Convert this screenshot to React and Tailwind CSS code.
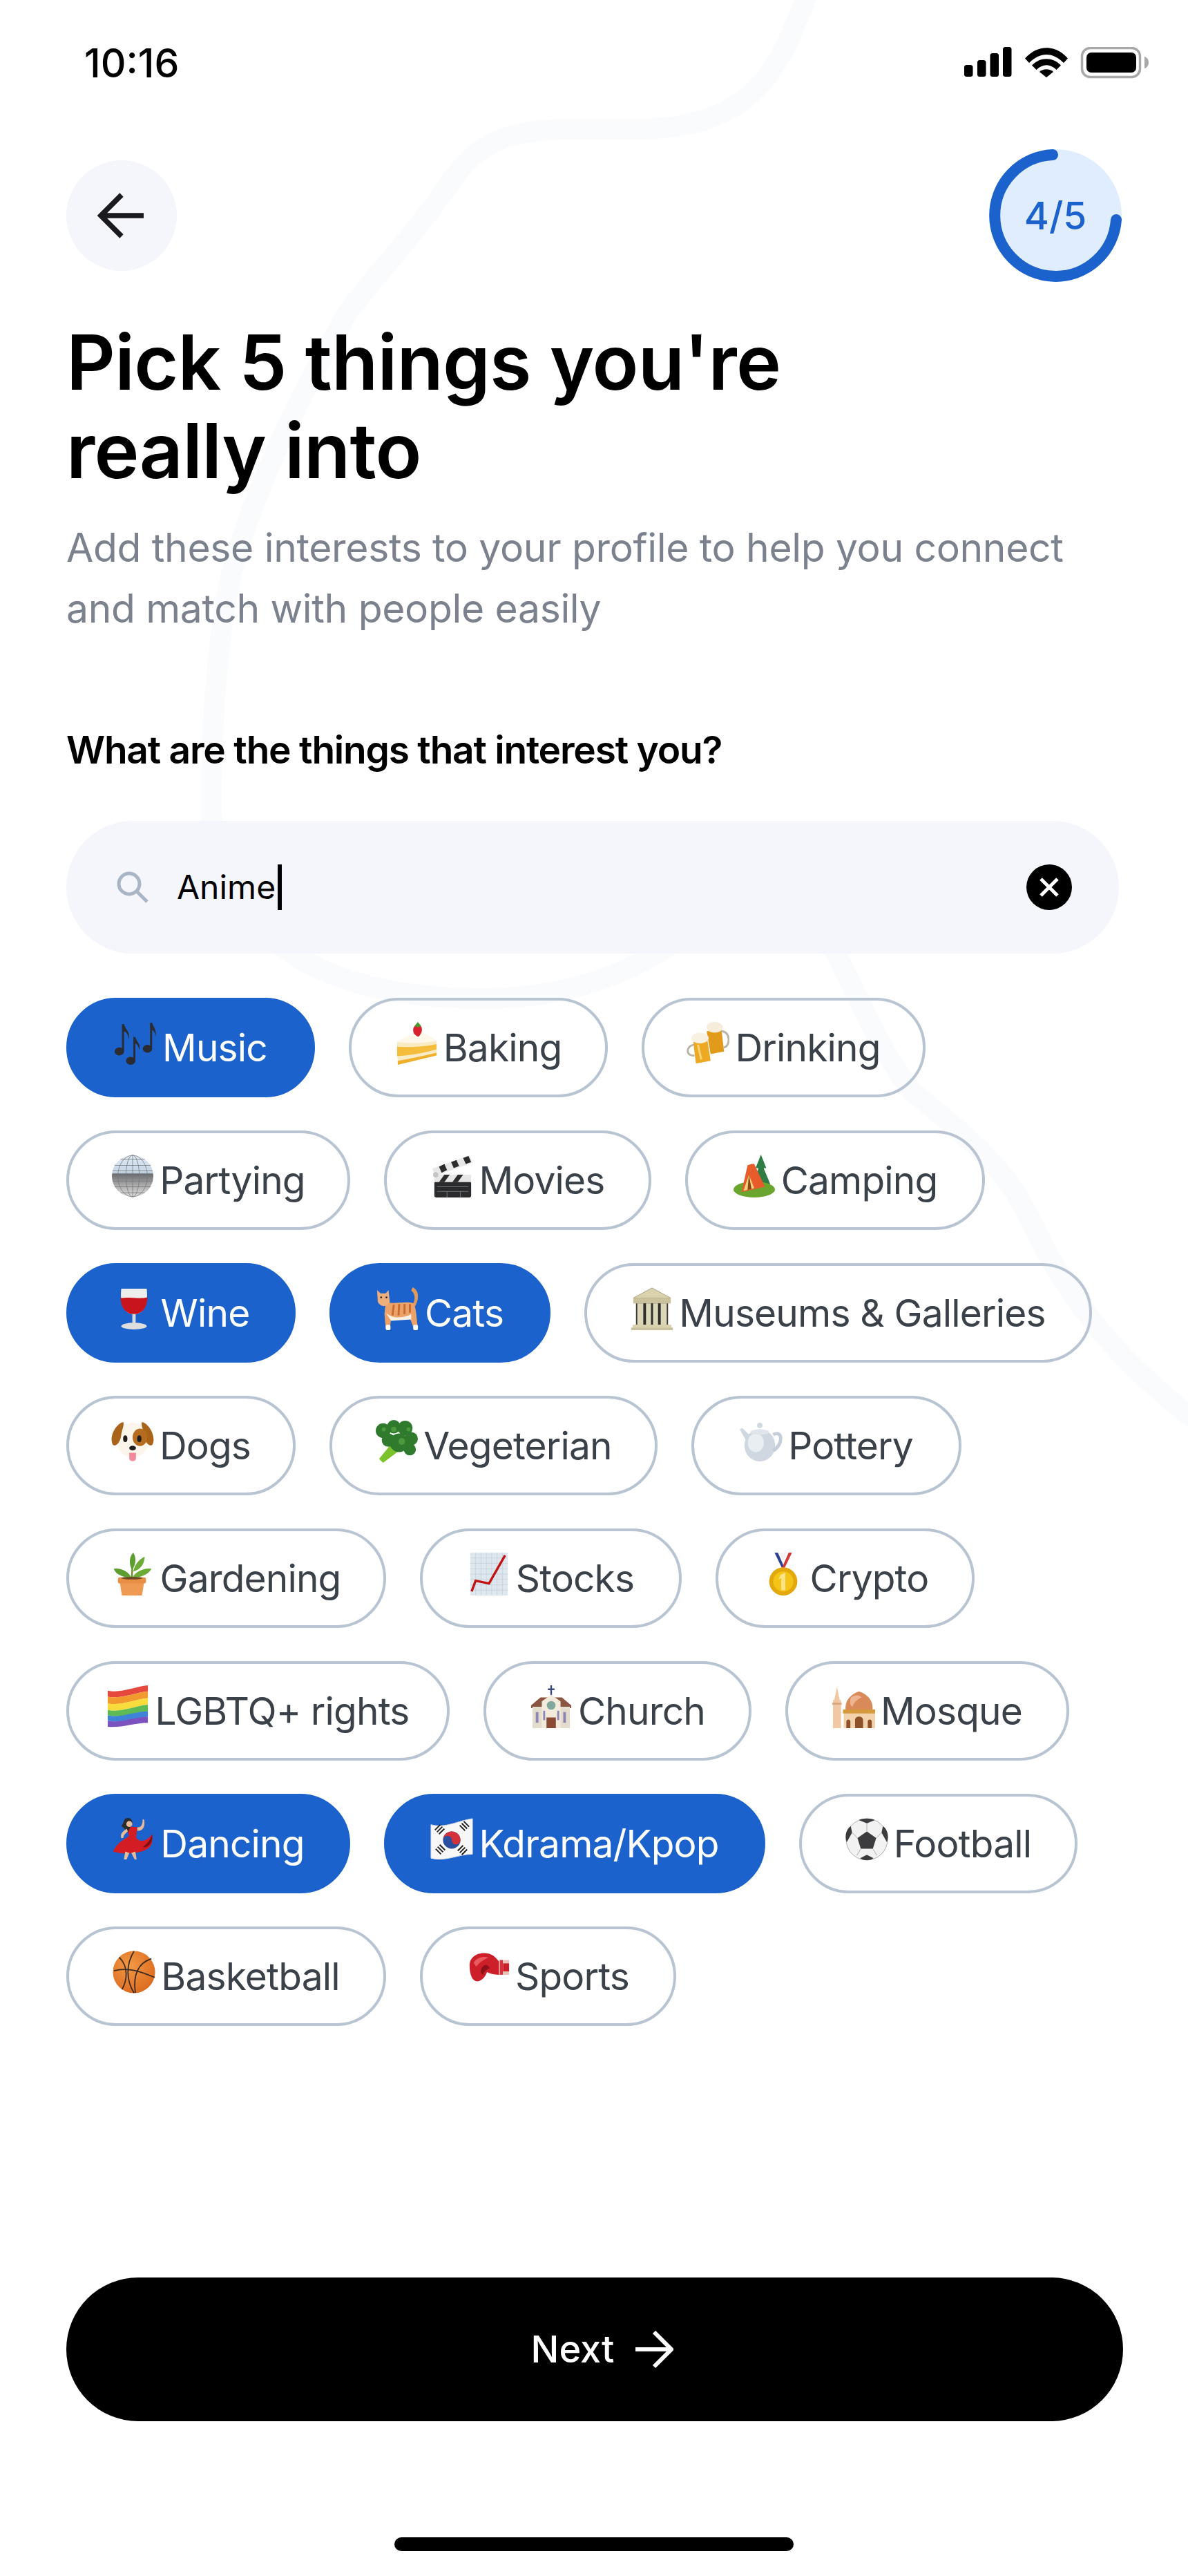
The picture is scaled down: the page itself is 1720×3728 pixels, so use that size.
import React from "react";

const font = { fontFamily: "Inter, sans-serif" };

const Cake = () => (
  <svg viewBox="0 0 64 64" className="h-full w-full">
    <path d="M3 30 L36 12 L62 28 L62 50 L4 64 Z" fill="#f9ebc4" />
    <path d="M3 30 L36 12 L62 28 C40 32 20 32 3 30 Z" fill="#fff8ea" />
    <path d="M3 37 C24 38 44 37 62 33 L62 41 C44 46 24 50 3 51 Z" fill="#f5bd3c" />
    <path d="M4 58 C24 55 44 50 62 46 L62 50 L4 64 Z" fill="#efb02e" />
    <path d="M27 12 C27 5 34 3 38 6 C42 9 40 18 35 22 C30 20 27 17 27 12 Z" fill="#d9202f" />
    <path d="M29 6 L34 0 L39 6 L34 8 Z" fill="#4c9a2a" />
  </svg>
);
const Notes = () => (
  <svg viewBox="0 0 64 64" className="h-full w-full" fill="#2a2c31">
    <ellipse cx="8" cy="44" rx="7" ry="6" />
    <path d="M12 42 L12 3 L15 3 C17 12 25 14 22 26 C21 16 17 15 15 14 L15 44 Z" />
    <ellipse cx="25" cy="58" rx="7" ry="6" />
    <path d="M29 56 L29 22 L32 23 C34 30 40 32 38 42 C36 34 34 33 32 32 L32 58 Z" />
    <ellipse cx="50" cy="40" rx="7" ry="6" />
    <path d="M54 38 L54 1 L57 1 C59 8 64 12 62 22 C61 14 59 13 57 12 L57 40 Z" />
  </svg>
);
const Beer = () => (
  <svg viewBox="0 0 64 64" className="h-full w-full">
    <path d="M30 14 L52 10 L56 44 L36 48 Z" fill="#e29a1a" />
    <path d="M52 14 C66 13 66 38 55 38" fill="none" stroke="#b9b4a5" strokeWidth="3" />
    <ellipse cx="42" cy="8" rx="12" ry="8" fill="#f5ecda" />
    <path d="M10 30 L31 26 L36 58 L14 62 Z" fill="#eda824" />
    <path d="M11 34 C-2 36 -1 52 12 50" fill="none" stroke="#b9b4a5" strokeWidth="3" />
    <ellipse cx="20" cy="24" rx="13" ry="8" fill="#f8f1e2" />
    <path d="M17 34 L22 56" stroke="#fbd778" strokeWidth="3" />
  </svg>
);
const Disco = () => (
  <svg viewBox="0 0 64 64" className="h-full w-full">
    <defs>
      <linearGradient id="disco" x1="0" y1="0" x2="0" y2="1">
        <stop offset="0" stopColor="#dfeaf5" />
        <stop offset=".42" stopColor="#c4d6e8" />
        <stop offset=".45" stopColor="#6a6c70" />
        <stop offset=".7" stopColor="#a6a6a6" />
        <stop offset="1" stopColor="#e0e0e0" />
      </linearGradient>
    </defs>
    <circle cx="32" cy="32" r="31" fill="url(#disco)" />
    <g fill="none" stroke="#777" strokeWidth=".8">
      <ellipse cx="32" cy="32" rx="10" ry="31" />
      <ellipse cx="32" cy="32" rx="22" ry="31" />
      <path d="M32 1 V63 M5 16 H59 M1 32 H63 M5 48 H59 M14 7 H50 M14 57 H50 M2 24 H62 M2 40 H62" />
    </g>
  </svg>
);
const Clapper = () => (
  <svg viewBox="0 0 64 64" className="h-full w-full">
    <path d="M2 21 L58 1 L62 12 L6 32 Z" fill="#e7e7e7" />
    <path d="M12 18 L20 14 L24 23 L16 27 Z M30 11 L38 8 L42 17 L34 20 Z M48 5 L56 2 L60 11 L52 14 Z" fill="#2c2c2c" />
    <rect x="5" y="40" width="55" height="24" rx="3" fill="#2a2b2d" />
    <rect x="5" y="30" width="55" height="11" fill="#e7e7e7" />
    <path d="M12 41 L20 30 H28 L20 41 Z M32 41 L40 30 H48 L40 41 Z" fill="#2c2c2c" />
    <path d="M9 48 H56 M9 55 H56 M24 55 V64 M44 55 V64" stroke="#777" strokeWidth="1" />
    <circle cx="7" cy="30" r="4" fill="#c5c5c5" />
  </svg>
);
const Tent = () => (
  <svg viewBox="0 0 64 64" className="h-full w-full">
    <path d="M42 0 L50 20 L46 20 L56 44 L34 44 L38 20 L34 20 Z" fill="#2e7d44" />
    <ellipse cx="32" cy="52" rx="31" ry="12" fill="#6aa52d" />
    <path d="M22 16 C26 15 29 13 32 14 L48 48 L13 56 Z" fill="#e85b2b" />
    <path d="M24 30 L16 54 L32 50 Z" fill="#f4d27a" />
    <path d="M24 30 L22 53 L28 51 Z" fill="#8a4a16" />
  </svg>
);
const Glass = () => (
  <svg viewBox="0 0 64 64" className="h-full w-full">
    <path d="M13 2 H51 C53 20 50 38 34 40 H30 C14 38 11 20 13 2 Z" fill="#eeeeee" />
    <path d="M12 16 C24 14 40 18 52 15 C52 28 46 39 34 40 H30 C18 39 12 28 12 16 Z" fill="#c8141c" />
    <rect x="29.5" y="40" width="5" height="15" fill="#d9d9d9" />
    <ellipse cx="32" cy="58" rx="19" ry="5" fill="#dedede" />
  </svg>
);
const Cat = () => (
  <svg viewBox="0 0 64 64" className="h-full w-full">
    <path d="M54 0 C64 4 64 18 58 28 L54 26 C58 20 59 10 52 5 Z" fill="#e29a5c" />
    <path d="M14 22 C24 26 44 20 56 24 C60 34 60 48 62 62 H56 L50 46 L22 46 L20 62 H14 L12 40 Z" fill="#eba36a" />
    <path d="M14 38 C24 48 42 46 52 40 L52 48 L22 50 Z" fill="#fbf2e6" />
    <path d="M26 26 L24 42 M34 25 L33 42 M42 25 L42 40 M50 25 L50 38" stroke="#c9692e" strokeWidth="3" />
    <path d="M1 4 L6 9 H14 L18 4 L20 22 C16 30 6 30 2 22 Z" fill="#edb07c" />
    <circle cx="7" cy="15" r="1.4" fill="#222" />
    <circle cx="15" cy="15" r="1.4" fill="#222" />
    <rect x="14" y="56" width="7" height="8" rx="2" fill="#fff" />
    <rect x="55" y="56" width="7" height="8" rx="2" fill="#fff" />
  </svg>
);
const Museum = () => (
  <svg viewBox="0 0 64 64" className="h-full w-full">
    <path d="M32 1 L60 16 H4 Z" fill="#d9d2ac" stroke="#a9a27c" strokeWidth="1" />
    <rect x="4" y="16" width="56" height="8" fill="#c9c29c" />
    <rect x="8" y="24" width="48" height="32" fill="#3b3a33" />
    <path d="M10 24 H20 V56 H10 Z M22 24 H31 V56 H22 Z M33 24 H42 V56 H33 Z M44 24 H54 V56 H44 Z" fill="#dcd6b8" />
    <path d="M19 24 H23 V56 H19 Z M30.5 24 H33.5 V56 H30.5 Z M41 24 H45 V56 H41 Z" fill="#2f2e29" />
    <rect x="3" y="56" width="58" height="4" fill="#d9d2ac" />
    <rect x="1" y="60" width="62" height="4" fill="#c9c29c" />
  </svg>
);
const Dog = () => (
  <svg viewBox="0 0 64 64" className="h-full w-full">
    <ellipse cx="32" cy="30" rx="24" ry="26" fill="#fbf5ec" />
    <path d="M18 3 C6 6 -3 26 2 36 C6 42 14 34 15 22 C16 14 20 8 18 3 Z" fill="#a9641a" />
    <path d="M46 3 C58 6 67 26 62 36 C58 42 50 34 49 22 C48 14 44 8 46 3 Z" fill="#a9641a" />
    <ellipse cx="43" cy="26" rx="11" ry="13" fill="#b66c1e" />
    <ellipse cx="21" cy="28" rx="3.2" ry="5" fill="#1e1e1e" />
    <ellipse cx="42" cy="28" rx="3.2" ry="5" fill="#1e1e1e" />
    <ellipse cx="32" cy="42" rx="5" ry="3.5" fill="#1e1e1e" />
    <path d="M27 49 H37 V57 C37 63 27 63 27 57 Z" fill="#f08a9c" />
  </svg>
);
const Broccoli = () => (
  <svg viewBox="0 0 64 64" className="h-full w-full">
    <path d="M12 64 L6 58 L24 36 L36 46 Z" fill="#7cc22c" />
    <g fill="#2f7a2c">
      <circle cx="12" cy="16" r="11" />
      <circle cx="28" cy="10" r="10" />
      <circle cx="45" cy="12" r="11" />
      <circle cx="54" cy="28" r="10" />
      <circle cx="52" cy="44" r="9" />
      <circle cx="36" cy="34" r="14" />
      <circle cx="20" cy="30" r="10" />
    </g>
    <g fill="#4c9a3d">
      <circle cx="28" cy="14" r="4" />
      <circle cx="40" cy="32" r="5" />
      <circle cx="13" cy="14" r="3" />
      <circle cx="50" cy="14" r="3" />
    </g>
  </svg>
);
const Pot = () => (
  <svg viewBox="0 0 64 64" className="h-full w-full">
    <ellipse cx="30" cy="38" rx="23" ry="24" fill="#cfd8e0" />
    <ellipse cx="24" cy="34" rx="12" ry="14" fill="#e9eef2" />
    <ellipse cx="30" cy="18" rx="14" ry="4" fill="#dfe5ea" />
    <circle cx="30" cy="8" r="4" fill="#cfd8e0" />
    <path d="M9 30 L0 14 L4 12 L14 22 Z" fill="#cfd8e0" />
    <path d="M50 22 C64 14 66 36 50 46" fill="none" stroke="#c5ced7" strokeWidth="5" />
  </svg>
);
const Plant = () => (
  <svg viewBox="0 0 64 64" className="h-full w-full">
    <path d="M31 40 C31 26 32 14 34 6" stroke="#6f8f2a" strokeWidth="2.5" fill="none" />
    <path d="M31 26 C26 16 27 6 33 0 C38 8 37 18 31 26 Z" fill="#5d9e30" />
    <path d="M33 28 C36 14 46 8 50 6 C50 16 44 26 33 28 Z" fill="#6bab36" />
    <path d="M31 38 C24 38 6 34 4 24 C14 22 26 28 31 38 Z" fill="#5d9e30" />
    <path d="M31 38 C38 38 56 34 60 24 C50 22 36 28 31 38 Z" fill="#6bab36" />
    <path d="M12 39 H50 L46 64 H16 Z" fill="#ee9a52" />
    <rect x="10" y="37" width="42" height="9" rx="3" fill="#e88e45" />
    <ellipse cx="31" cy="38" rx="16" ry="2" fill="#6d4a24" />
  </svg>
);
const Chart = () => (
  <svg viewBox="0 0 64 64" className="h-full w-full">
    <rect x="4" width="56" height="64" fill="#dfe7ee" />
    <path d="M4 8 H60 M4 16 H60 M4 24 H60 M4 32 H60 M4 40 H60 M4 48 H60 M4 56 H60 M12 0 V64 M20 0 V64 M28 0 V64 M36 0 V64 M44 0 V64 M52 0 V64" stroke="#c5d1db" strokeWidth=".8" />
    <path d="M6 58 L12 42 L32 46 L56 4" fill="none" stroke="#c01414" strokeWidth="3.5" />
  </svg>
);
const Medal = () => (
  <svg viewBox="0 0 64 64" className="h-full w-full">
    <path d="M19 0 L30 23 H34 L24 0 Z" fill="#2e3f96" />
    <path d="M45 0 L34 23 H30 L40 0 Z" fill="#d23a35" />
    <path d="M27 0 L32 14 L37 0 Z" fill="#f4f4f4" />
    <circle cx="32" cy="43" r="21" fill="#e3a90c" />
    <circle cx="32" cy="43" r="15" fill="#f4c518" />
    <path d="M28 33 L35 30 V56 H29 V38 L25 40 Z" fill="#fbe48a" />
  </svg>
);
const Flag = () => (
  <svg viewBox="0 0 64 64" className="h-full w-full">
    <path d="M2 8 C22 12 42 2 62 0 V9 C42 11 22 21 2 17 Z" fill="#e5483d" />
    <path d="M2 17 C22 21 42 11 62 9 V19 C42 21 22 31 2 27 Z" fill="#f29a2e" />
    <path d="M2 27 C22 31 42 21 62 19 V29 C42 31 22 41 2 37 Z" fill="#f8dc3c" />
    <path d="M2 37 C22 41 42 31 62 29 V39 C42 41 22 49 2 45 Z" fill="#5dba55" />
    <path d="M2 45 C22 49 42 39 62 39 V47 C42 49 22 57 2 53 Z" fill="#3f83d8" />
    <path d="M2 53 C22 57 42 47 62 47 V56 C42 56 22 64 2 62 Z" fill="#7c52c0" />
  </svg>
);
const Church = () => (
  <svg viewBox="0 0 64 64" className="h-full w-full">
    <path d="M32 0 V16 M27 6 H37" stroke="#3d4a7e" strokeWidth="2.5" />
    <path d="M2 30 L16 18 H48 L62 30 V34 H2 Z" fill="#8a5540" />
    <rect x="4" y="32" width="56" height="32" fill="#e4dccd" />
    <path d="M18 24 L32 14 L46 24 V64 H18 Z" fill="#f2ebdc" />
    <circle cx="32" cy="30" r="6.5" fill="#7fa79a" />
    <rect x="25" y="48" width="14" height="16" fill="#8a4a36" />
    <rect x="9" y="40" width="4" height="16" fill="#8d87b8" />
    <rect x="50" y="40" width="4" height="16" fill="#8d87b8" />
    <rect x="20" y="38" width="3" height="14" fill="#8d87b8" />
    <rect x="41" y="38" width="3" height="14" fill="#8d87b8" />
  </svg>
);
const Mosque = () => (
  <svg viewBox="0 0 64 64" className="h-full w-full">
    <path d="M7 2 L11 22 H13 V64 H1 V22 H3 Z" fill="#f0c8a4" />
    <rect x="0" y="26" width="14" height="3" fill="#d9a77d" />
    <rect x="17" y="40" width="47" height="24" fill="#f3d3ae" />
    <path d="M40 9 C54 14 62 24 60 38 H20 C18 24 26 14 40 9 Z" fill="#d98a58" />
    <path d="M28 18 C34 14 40 14 44 18 C38 20 32 26 30 32 C26 30 26 22 28 18 Z" fill="#eeb592" />
    <rect x="16" y="36" width="48" height="6" fill="#d49a3c" />
    <path d="M21 64 V54 C21 50 27 50 27 54 V64 Z M34 64 V52 C34 45 46 45 46 52 V64 Z M53 64 V54 C53 50 59 50 59 54 V64 Z" fill="#8c5128" />
  </svg>
);
const Dancer = () => (
  <svg viewBox="0 0 64 64" className="h-full w-full">
    <path d="M24 28 C10 36 4 44 2 50 C14 54 30 54 44 50 C58 46 62 40 60 24 C52 36 40 38 34 26 Z" fill="#d41c24" />
    <path d="M46 44 C56 44 62 36 60 24 C58 34 52 38 46 44 Z" fill="#7a0f14" />
    <path d="M22 12 L38 14 L36 30 L26 30 Z" fill="#d41c24" />
    <path d="M29 52 L34 62 H37 L35 50 Z M20 50 L18 62 H22 L26 52 Z" fill="#e8bb98" />
    <path d="M20 1 C26 -2 32 2 30 9 C28 14 26 16 24 22 C20 18 18 14 14 12 C18 8 17 4 20 1 Z" fill="#2a2a2a" />
    <path d="M38 14 C44 14 46 10 46 2 L48 2 C50 10 48 20 38 19 Z M22 16 C16 20 12 24 14 30 L17 30 C17 26 20 23 24 20 Z" fill="#e8bb98" />
    <circle cx="26" cy="9" r="4.5" fill="#e8bb98" />
  </svg>
);
const KoreaFlag = () => (
  <svg viewBox="0 0 64 64" className="h-full w-full">
    <path d="M1 10 C22 16 42 4 63 1 V54 C42 54 22 66 1 60 Z" fill="#f7f7f7" stroke="#dedede" />
    <circle cx="32" cy="33" r="13" fill="#2b4f9e" />
    <path d="M19 33 A13 13 0 0 1 45 33 A6.5 6.5 0 0 1 32 33 A6.5 6.5 0 0 0 19 33 Z" fill="#d3323c" />
    <g stroke="#222" strokeWidth="2">
      <path d="M7 18 L15 10 M10 21 L18 13 M13 24 L21 16" />
      <path d="M44 11 L52 19 M47 8 L55 16 M50 5 L58 13" />
      <path d="M8 46 L16 54 M11 43 L19 51 M14 40 L22 48" />
      <path d="M44 52 L52 44 M47 55 L55 47 M41 49 L49 41" />
    </g>
  </svg>
);
const Soccer = () => (
  <svg viewBox="0 0 64 64" className="h-full w-full">
    <circle cx="32" cy="32" r="31" fill="#f2f2f2" stroke="#999" strokeWidth=".8" />
    <path d="M32 20 L46 30 L41 46 H23 L18 30 Z" fill="#3c3c3e" />
    <path d="M20 3 L32 8 L44 3 C38 0 26 0 20 3 Z M56 12 L54 22 L62 36 C66 26 62 16 56 12 Z M8 12 L10 22 L2 36 C-2 26 2 16 8 12 Z M22 60 L32 55 L42 60 C36 64 28 64 22 60 Z" fill="#3c3c3e" />
    <path d="M32 8 V20 M46 30 L54 22 M18 30 L10 22 M41 46 L47 56 M23 46 L17 56" stroke="#aaa" strokeWidth="1" />
  </svg>
);
const Basketball = () => (
  <svg viewBox="0 0 64 64" className="h-full w-full">
    <defs>
      <radialGradient id="bball" cx=".4" cy=".35" r=".75">
        <stop offset="0" stopColor="#f39a45" />
        <stop offset="1" stopColor="#d9661c" />
      </radialGradient>
    </defs>
    <circle cx="32" cy="32" r="31.5" fill="url(#bball)" />
    <g fill="none" stroke="#3a2a20" strokeWidth="1.8">
      <path d="M32 1 C20 20 20 44 32 63" />
      <path d="M10 10 C24 24 22 44 14 58" />
      <path d="M58 12 C40 18 30 34 34 63" />
      <path d="M2 30 C24 24 44 32 63 40" />
    </g>
  </svg>
);
const Glove = () => (
  <svg viewBox="0 0 64 64" className="h-full w-full">
    <path d="M4 22 C4 8 18 2 30 4 C40 5 44 12 48 16 V36 C40 36 34 34 30 32 C28 38 24 44 16 46 C8 46 4 36 4 22 Z" fill="#cc1f2a" />
    <path d="M10 18 C14 10 26 8 32 10 C24 14 18 18 14 24 Z" fill="#e85a60" />
    <path d="M22 26 C26 20 30 20 34 26 C30 28 26 30 24 36 C20 34 20 30 22 26 Z" fill="#8e1018" />
    <rect x="49" y="14" width="5" height="22" fill="#d6343b" />
    <rect x="54" y="14" width="9" height="22" fill="#e9c3b5" />
    <rect x="54" y="19" width="9" height="12" fill="#cc1f2a" />
  </svg>
);

const chips = [
  { label: "Music", Icon: Notes, on: true, cls: "w-[360px]" },
  { label: "Baking", Icon: Cake, cls: "w-[375px]" },
  { label: "Drinking", Icon: Beer, cls: "w-[411px]" },
  { label: "Partying", Icon: Disco, cls: "w-[411px]" },
  { label: "Movies", Icon: Clapper, cls: "w-[387px]" },
  { label: "Camping", Icon: Tent, cls: "w-[434px]" },
  { label: "Wine", Icon: Glass, on: true, cls: "w-[332px]" },
  { label: "Cats", Icon: Cat, on: true, cls: "w-[320px]" },
  { label: "Museums & Galleries", Icon: Museum, cls: "w-[735px]" },
  { label: "Dogs", Icon: Dog, cls: "w-[332px]" },
  { label: "Vegeterian", Icon: Broccoli, cls: "w-[475px]" },
  { label: "Pottery", Icon: Pot, cls: "w-[391px]" },
  { label: "Gardening", Icon: Plant, cls: "w-[463px]" },
  { label: "Stocks", Icon: Chart, cls: "w-[379px]" },
  { label: "Crypto", Icon: Medal, cls: "w-[375px]" },
  { label: "LGBTQ+ rights", Icon: Flag, cls: "w-[555px]" },
  { label: "Church", Icon: Church, cls: "w-[388px]" },
  { label: "Mosque", Icon: Mosque, cls: "w-[411px]" },
  { label: "Dancing", Icon: Dancer, on: true, cls: "w-[411px]" },
  { label: "Kdrama/Kpop", Icon: KoreaFlag, on: true, cls: "w-[552px]" },
  { label: "Football", Icon: Soccer, cls: "w-[403px]" },
  { label: "Basketball", Icon: Basketball, cls: "w-[463px]" },
  { label: "Sports", Icon: Glove, cls: "w-[371px]" },
];

function Chip({ label, Icon, on, cls }) {
  return (
    <div
      className={`flex h-[144px] items-center justify-center gap-2 rounded-full border-4 ${cls} ${
        on ? "border-[#1c62cc] bg-[#1c62cc] text-white" : "border-[#b8c4d2] text-[#3b4148]"
      }`}
    >
      <span className="relative -top-[6px] h-[62px] w-[62px] shrink-0">
        <Icon />
      </span>
      <span className="whitespace-nowrap text-[55px] leading-none tracking-[-0.015em]">{label}</span>
    </div>
  );
}

export default function App() {
  return (
    <div className="relative h-[3728px] w-[1720px] overflow-hidden bg-white text-black" style={font}>
      <svg className="absolute left-0 top-0" width="1720" height="3728" fill="none">
        <path
          d="M1170 -10 C1130 90 1100 187 920 187 L820 187 C720 187 680 220 650 267 C600 340 550 390 505 450 C440 560 370 700 335 830 C315 920 305 1050 306 1180 C310 1300 400 1445 699 1445 C850 1445 950 1390 1020 1330 C1100 1270 1170 1330 1211 1380 C1250 1460 1280 1530 1321 1580 C1370 1620 1420 1660 1456 1706 C1490 1750 1510 1810 1537 1849 C1570 1900 1620 1970 1730 2055"
          stroke="#fafbfd"
          strokeWidth="30"
        />
      </svg>

      <div className="relative flex h-[3728px] flex-col">
        <div className="flex h-[216px] justify-between pl-[122px] pr-[57px] pt-[62px]">
          <span className="text-[57px] font-medium leading-[60px]">10:16</span>
          <svg width="267" height="48" viewBox="0 0 267 48" className="mt-[6px]">
            <g fill="#000">
              <rect x="0" y="26" width="12.5" height="17" rx="3.5" />
              <rect x="19" y="19" width="12.5" height="24" rx="3.5" />
              <rect x="37.5" y="9" width="12.5" height="34" rx="3.5" />
              <rect x="56" y="0" width="12.5" height="43" rx="3.5" />
              <path d="M88 16.5 C106 -4 132 -4 150 16.5 L144 23 C128 7 110 7 94 23 Z" />
              <path d="M98 26.5 C110 14 128 14 140 26.5 L133.5 33 C124 24 114 24 104.5 33 Z" />
              <path d="M109 36 C114 31 124 31 129 36 L119 44 Z" />
            </g>
            <rect x="170.5" y="1.5" width="84" height="42" rx="12" fill="none" stroke="#a8a8a8" strokeWidth="3.5" />
            <rect x="177" y="8" width="72" height="29" rx="7" fill="#000" />
            <path d="M261 14 C265 15 267 19 267 22.5 C267 26 265 30 261 31 Z" fill="#a8a8a8" />
          </svg>
        </div>

        <div className="flex h-[192px] items-start justify-between pl-[96px] pr-[96px]">
          <div className="mt-[16px] flex h-[160px] w-[160px] items-center justify-center rounded-full bg-[#f4f6fb]">
            <svg width="72" height="72" viewBox="0 0 72 72" fill="none" stroke="#1a1a1f" strokeWidth="7.5">
              <path d="M68 36 H8 M36 6 L6 36 L36 66" />
            </svg>
          </div>
          <div className="relative flex h-[192px] w-[192px] items-center justify-center rounded-full bg-[#e0edfe]">
            <svg width="192" height="192" viewBox="0 0 192 192" className="absolute inset-0" fill="none">
              <path
                d="M92 8 A88 88 0 1 0 184 102"
                stroke="#1c62cc"
                strokeWidth="16"
                strokeLinecap="round"
              />
            </svg>
            <span className="relative text-[55px] font-medium leading-none text-[#1c62cc]">4/5</span>
          </div>
        </div>

        <div className="mt-[52px] px-[96px]">
          <h1 className="text-[110px] font-semibold leading-[128px] tracking-[-0.007em]">
            Pick 5 things you're
            <br />
            really into
          </h1>
          <p className="mt-[33px] text-[57px] leading-[88px] tracking-[-0.006em] text-[#7c828d]">
            Add these interests to your profile to help you connect
            <br />
            and match with people easily
          </p>
          <h2 className="mt-[128px] text-[55px] font-semibold leading-[64px] tracking-[-0.022em]">
            What are the things that interest you?
          </h2>

          <div className="mt-[71px] flex h-[192px] w-[1524px] items-center rounded-full bg-[#f4f6fb] pl-[72px] pr-[68px]">
            <svg width="48" height="48" viewBox="0 0 48 48" fill="none" stroke="#a9b5c4" strokeWidth="5">
              <circle cx="19" cy="19" r="15" />
              <path d="M30 30 L45 45" />
            </svg>
            <span className="ml-[40px] text-[48px] leading-none">Anime</span>
            <span className="ml-[3px] h-[66px] w-[6px] bg-black" />
            <span className="ml-auto flex h-[66px] w-[66px] items-center justify-center rounded-full bg-black">
              <svg width="30" height="30" viewBox="0 0 30 30" fill="none" stroke="#fff" strokeWidth="5">
                <path d="M3 3 L27 27 M27 3 L3 27" />
              </svg>
            </span>
          </div>

          <div className="mt-[64px] flex flex-wrap gap-x-[49px] gap-y-[48px]">
            {chips.map((c) => (
              <Chip key={c.label} {...c} />
            ))}
          </div>
        </div>

        <div className="mx-[96px] mt-auto flex h-[208px] w-[1530px] items-center justify-center gap-[30px] rounded-full bg-black pl-[22px] text-white">
          <span className="text-[54px] font-medium leading-none">Next</span>
          <svg width="56" height="56" viewBox="0 0 56 56" fill="none" stroke="#fff" strokeWidth="6">
            <path d="M1 28 H52 M28 3 L53 28 L28 53" />
          </svg>
        </div>
        <div className="mb-[36px] mt-[168px] flex justify-center">
          <div className="h-[20px] w-[578px] rounded-full bg-black" />
        </div>
      </div>
    </div>
  );
}
